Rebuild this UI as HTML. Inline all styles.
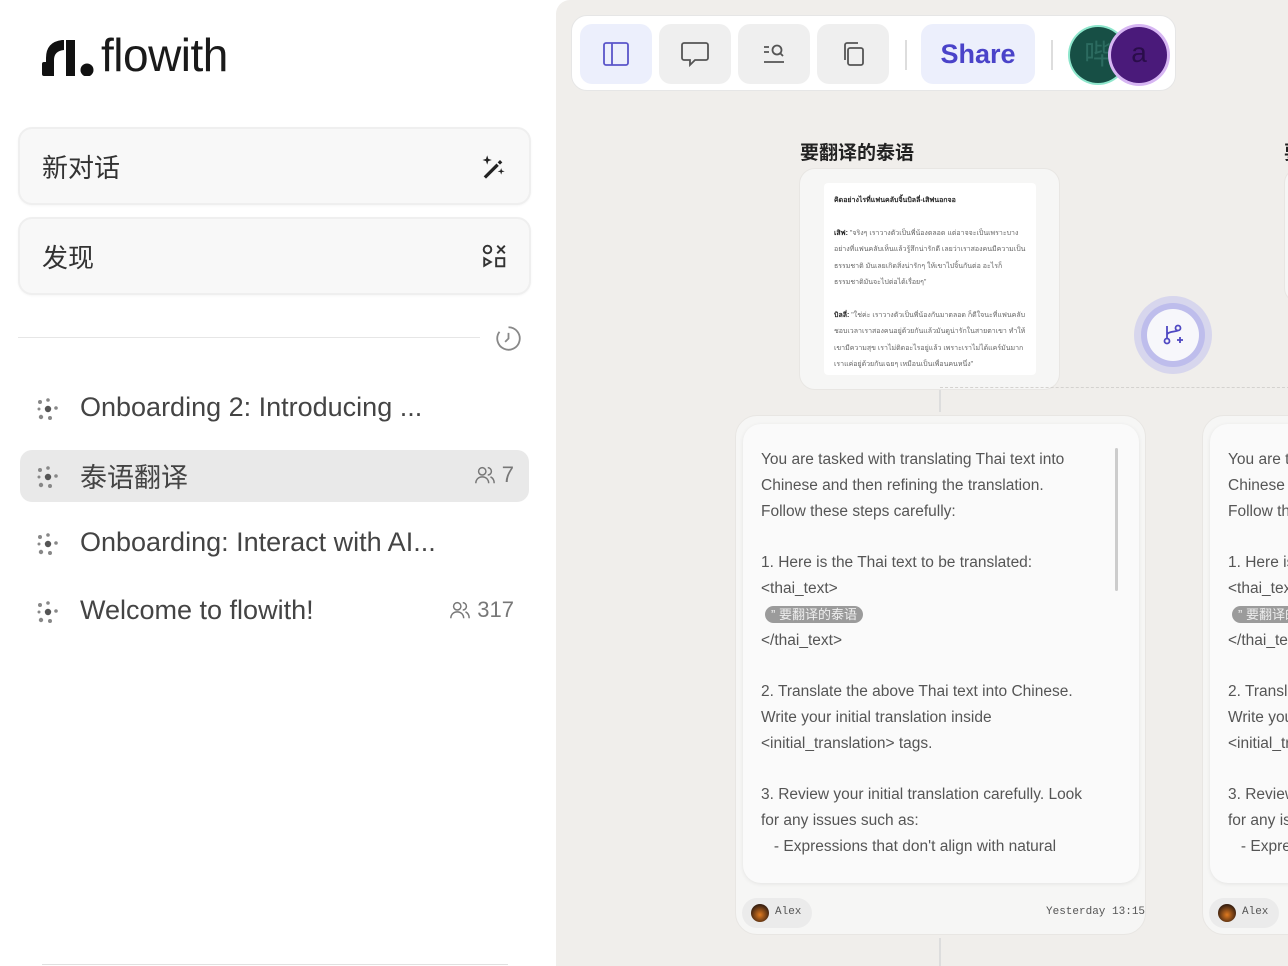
<!DOCTYPE html>
<html><head><meta charset="utf-8"><style>
*{margin:0;padding:0;box-sizing:border-box}
body{width:1288px;height:966px;overflow:hidden;background:#fff;font-family:"Liberation Sans","Noto Sans CJK SC",sans-serif;position:relative}
.abs{position:absolute}
.btn{position:absolute;left:18px;width:513px;height:78px;border-radius:14px;background:#f8f8f8;border:2px solid #efefef;box-shadow:0 1px 2px rgba(0,0,0,.04)}
.btn span{position:absolute;left:22px;top:19px;font-size:26px;color:#333}
.item{position:absolute;left:20px;width:509px;height:52px;border-radius:12px}
.item .t{position:absolute;left:60px;top:10px;font-size:27px;color:#444;white-space:nowrap}
.item .n{position:absolute;right:15px;top:12px;font-size:22px;color:#777;display:flex;align-items:center;gap:6px}
.canvas{position:absolute;left:556px;top:0;width:732px;height:966px;background:#f0eeeb;border-radius:14px 0 0 0;overflow:hidden}
.tb{position:absolute;left:15px;top:15px;width:605px;height:76px;background:#fff;border-radius:16px;border:1px solid #e6e6e6}
.tbb{position:absolute;top:8px;width:72px;height:60px;border-radius:12px;background:#efefef;display:flex;align-items:center;justify-content:center}
.card{position:absolute;background:#f6f6f5;border:1px solid #e8e6e3;border-radius:22px}
.inner{position:absolute;background:#fafafa;border-radius:18px;box-shadow:0 1px 4px rgba(0,0,0,.08)}
.txt{font-size:15.5px;line-height:25.8px;color:#555;white-space:pre;font-family:"Liberation Sans","Noto Sans CJK SC",sans-serif}
.chip{display:inline-block;background:#9b9b9b;color:#eee;border-radius:9px;font-size:13px;line-height:17px;padding:0 6px;margin-left:4px}
.foot{position:absolute;font-family:"Liberation Mono",monospace;font-size:11px;color:#555;white-space:nowrap}
</style></head><body>
<svg class="abs" style="left:42px;top:38px" width="54" height="38" viewBox="0 0 54 38"><path d="M4 38 V20 Q4 4 20 2 L22 2 L22 12 Q12 13 12 22 V38Z" fill="#111"/><path d="M24 2 H33 V38 H24Z" fill="#111"/><rect x="0" y="24" width="12" height="14" rx="2" fill="#111"/><circle cx="45" cy="32" r="6.5" fill="#111"/></svg>
<div class="abs" style="left:101px;top:28px;font-size:46px;color:#1a1a1a;letter-spacing:-0.5px">flowith</div>

<div class="btn" style="top:127px"><span>新对话</span>
<svg class="abs" style="right:22px;top:24px" width="28" height="28" viewBox="0 0 24 24" fill="#222"><path d="M5 21 L4 20 L15 9 L17 11 L6 22Z"/><path d="M16 8 L18 6 L20 8 L18 10Z"/><path d="M7 2 L8 5 L11 6 L8 7 L7 10 L6 7 L3 6 L6 5Z"/><path d="M19 13 L19.7 15 L22 15.7 L19.7 16.4 L19 18.5 L18.3 16.4 L16 15.7 L18.3 15Z"/></svg></div>
<div class="btn" style="top:217px"><span>发现</span>
<svg class="abs" style="right:22px;top:24px" width="26" height="26" viewBox="0 0 24 24" fill="none" stroke="#333" stroke-width="1.8"><circle cx="6" cy="6" r="3.5"/><path d="M15 2.5l7 7M22 2.5l-7 7"/><path d="M3 14v7l6-3.5z"/><rect x="14" y="14" width="7.5" height="7.5"/></svg></div>

<div class="abs" style="left:18px;top:337px;width:462px;height:1px;background:#e6e6e6"></div>
<svg class="abs" style="left:495px;top:325px" width="27" height="27" viewBox="0 0 24 24" fill="none" stroke="#888" stroke-width="1.6"><path d="M12 2a10 10 0 1 1-8 4"/><path d="M12 7v5l-3 3"/></svg>

<svg width="0" height="0" style="position:absolute"><defs><g id="dots" fill="#888"><circle cx="12" cy="12" r="3.2" fill="#555"/><circle cx="4" cy="5" r="2"/><circle cx="12" cy="3" r="1.8"/><circle cx="20" cy="11" r="1.8"/><circle cx="5" cy="20" r="2.2"/><circle cx="14" cy="21" r="2"/><circle cx="3" cy="12" r="1.5"/></g>
<g id="ppl" fill="none" stroke="#777" stroke-width="1.6"><circle cx="9" cy="8" r="4"/><path d="M2 21c0-4 3-7 7-7s7 3 7 7"/><path d="M15 4a4 4 0 0 1 0 8M18 14c2 1 4 3 4 7"/></g></defs></svg>

<div class="item" style="top:382px"><svg class="abs" style="left:16px;top:15px" width="24" height="24" viewBox="0 0 24 24"><use href="#dots"/></svg><div class="t">Onboarding 2: Introducing ...</div></div>
<div class="item" style="top:450px;background:#e9e9e9"><svg class="abs" style="left:16px;top:15px" width="24" height="24" viewBox="0 0 24 24"><use href="#dots"/></svg><div class="t" style="top:6px">泰语翻译</div><div class="n"><svg width="22" height="22" viewBox="0 0 24 24"><use href="#ppl"/></svg>7</div></div>
<div class="item" style="top:517px"><svg class="abs" style="left:16px;top:15px" width="24" height="24" viewBox="0 0 24 24"><use href="#dots"/></svg><div class="t">Onboarding: Interact with AI...</div></div>
<div class="item" style="top:585px"><svg class="abs" style="left:16px;top:15px" width="24" height="24" viewBox="0 0 24 24"><use href="#dots"/></svg><div class="t">Welcome to flowith!</div><div class="n"><svg width="22" height="22" viewBox="0 0 24 24"><use href="#ppl"/></svg>317</div></div>
<div class="abs" style="left:42px;top:964px;width:466px;height:1px;background:#e0e0e0"></div>

<div class="canvas">
 <div class="tb">
  <div class="tbb" style="left:8px;background:#eceffc"><svg width="28" height="26" viewBox="0 0 28 26" fill="none" stroke="#5a55c9" stroke-width="1.8"><rect x="2" y="2" width="24" height="22" rx="2"/><path d="M10 2v22"/></svg></div>
  <div class="tbb" style="left:87px"><svg width="30" height="28" viewBox="0 0 30 28" fill="none" stroke="#555" stroke-width="1.8"><path d="M4 3h22a2 2 0 0 1 2 2v13a2 2 0 0 1-2 2H15l-5 5v-5H4a2 2 0 0 1-2-2V5a2 2 0 0 1 2-2z"/></svg></div>
  <div class="tbb" style="left:166px"><svg width="26" height="24" viewBox="0 0 26 24" fill="none" stroke="#555" stroke-width="1.8"><path d="M3 5h5M3 10h5M3 20h20"/><circle cx="16" cy="8" r="4.5"/><path d="M19 11l3 3"/></svg></div>
  <div class="tbb" style="left:245px"><svg width="26" height="28" viewBox="0 0 26 28" fill="none" stroke="#555" stroke-width="1.8"><rect x="8" y="8" width="15" height="17" rx="2"/><path d="M5 20V5a2 2 0 0 1 2-2h11"/></svg></div>
  <div class="abs" style="left:333px;top:24px;width:2px;height:30px;background:#ddd"></div>
  <div class="tbb" style="left:349px;width:114px;background:#eceffc;color:#4a43c9;font-size:27px;font-weight:bold">Share</div>
  <div class="abs" style="left:479px;top:24px;width:2px;height:30px;background:#ddd"></div>
  <div class="abs" style="left:498px;top:11px;width:56px;height:56px;border-radius:50%;background:#174f45;box-shadow:0 0 0 2px #8ee6cc;color:#2c6b60;font-size:28px;text-align:center;line-height:56px">哔</div>
  <div class="abs" style="left:539px;top:11px;width:56px;height:56px;border-radius:50%;background:#4a1a7a;box-shadow:0 0 0 3px #d7b6f3;color:#2a0d4a;font-size:28px;text-align:center;line-height:52px">a</div>
 </div>

 <div class="abs" style="left:244px;top:138px;font-size:19px;font-weight:bold;color:#222">要翻译的泰语</div>
 <div class="card" style="left:243px;top:168px;width:261px;height:222px;border-radius:16px">
  <div class="abs" style="left:24px;top:14px;width:212px;height:192px;background:#fff;border-radius:4px;padding:10px 10px;font-size:7px;line-height:16.4px;color:#666;font-family:'Liberation Sans','Noto Sans CJK SC',sans-serif;overflow:hidden">
   <b style="color:#222">คิดอย่างไรที่แฟนคลับจิ้นบิลลี่-เสิฟนอกจอ</b><br><br>
   <b style="color:#222">เสิฟ:</b> "จริงๆ เราวางตัวเป็นพี่น้องตลอด แต่อาจจะเป็นเพราะบางอย่างที่แฟนคลับเห็นแล้วรู้สึกน่ารักดี เลยว่าเราสองคนมีความเป็นธรรมชาติ มันเลยเกิดสิ่งน่ารักๆ ให้เขาไปจิ้นกันต่อ อะไรก็ธรรมชาติมันจะไปต่อได้เรื่อยๆ"<br><br>
   <b style="color:#222">บิลลี่:</b> "ใช่ค่ะ เราวางตัวเป็นพี่น้องกันมาตลอด ก็ดีใจนะที่แฟนคลับชอบเวลาเราสองคนอยู่ด้วยกันแล้วมันดูน่ารักในสายตาเขา ทำให้เขามีความสุข เราไม่ติดอะไรอยู่แล้ว เพราะเราไม่ได้แคร์มันมาก เราแค่อยู่ด้วยกันเฉยๆ เหมือนเป็นเพื่อนคนหนึ่ง"
  </div>
 </div>
 <div class="abs" style="left:578px;top:296px;width:78px;height:78px;border-radius:50%;background:rgba(170,170,240,.35)"></div>
 <div class="abs" style="left:585px;top:303px;width:64px;height:64px;border-radius:50%;background:rgba(160,160,235,.45)"></div>
 <div class="abs" style="left:591px;top:309px;width:52px;height:52px;border-radius:50%;background:#f7f7fb"></div>
 <svg class="abs" style="left:605px;top:323px" width="24" height="24" viewBox="0 0 24 24" fill="none" stroke="#4f48c2" stroke-width="1.8"><circle cx="6" cy="18" r="2.5"/><circle cx="17" cy="5" r="2.5"/><path d="M6 15.5V3M6 12c0-4 11-3 11-5M16 17h6M19 14v6"/></svg>
 <div class="abs" style="left:384px;top:387px;width:350px;border-top:1.5px dashed #d4d2cf"></div>
 <div class="abs" style="left:383px;top:390px;width:1.5px;height:22px;background:#ddd"></div>
 <div class="abs" style="left:383px;top:938px;width:1.5px;height:28px;background:#ddd"></div>

 <div class="card" style="left:179px;top:415px;width:411px;height:520px">
  <div class="inner" style="left:7px;top:8px;width:396px;height:459px">
   <div class="txt abs" style="left:18px;top:23px">You are tasked with translating Thai text into
Chinese and then refining the translation.
Follow these steps carefully:

1. Here is the Thai text to be translated:
&lt;thai_text&gt;
<span class="chip">” 要翻译的泰语</span>
&lt;/thai_text&gt;

2. Translate the above Thai text into Chinese.
Write your initial translation inside
&lt;initial_translation&gt; tags.

3. Review your initial translation carefully. Look
for any issues such as:
   - Expressions that don't align with natural</div>
   <div class="abs" style="left:372px;top:24px;width:3px;height:143px;background:#ccc;border-radius:2px"></div>
  </div>
  <div class="abs" style="left:6px;top:482px;width:70px;height:30px;border-radius:15px;background:#ebebeb"></div>
  <div class="abs" style="left:15px;top:488px;width:18px;height:18px;border-radius:50%;background:radial-gradient(circle at 50% 60%,#e07a20,#3a2010 70%)"></div>
  <div class="foot" style="left:39px;top:490px">Alex</div>
  <div class="foot" style="left:310px;top:490px">Yesterday 13:15</div>
 </div>

 <div class="card" style="left:646px;top:415px;width:200px;height:520px">
  <div class="inner" style="left:7px;top:8px;width:200px;height:459px">
   <div class="txt abs" style="left:18px;top:23px">You are tasked
Chinese and then
Follow these steps

1. Here is the
&lt;thai_text&gt;
<span class="chip">” 要翻译的泰语</span>
&lt;/thai_text&gt;

2. Translate
Write your
&lt;initial_translation

3. Review your
for any issues
   - Expressions</div>
  </div>
  <div class="abs" style="left:6px;top:482px;width:70px;height:30px;border-radius:15px;background:#ebebeb"></div>
  <div class="abs" style="left:15px;top:488px;width:18px;height:18px;border-radius:50%;background:radial-gradient(circle at 50% 60%,#e07a20,#3a2010 70%)"></div>
  <div class="foot" style="left:39px;top:490px">Alex</div>
 </div>
 <div class="abs" style="left:728px;top:138px;font-size:19px;font-weight:bold;color:#222">要</div>
 <div class="card" style="left:728px;top:168px;width:30px;height:135px;border-radius:16px"></div>
</div>
</body></html>
